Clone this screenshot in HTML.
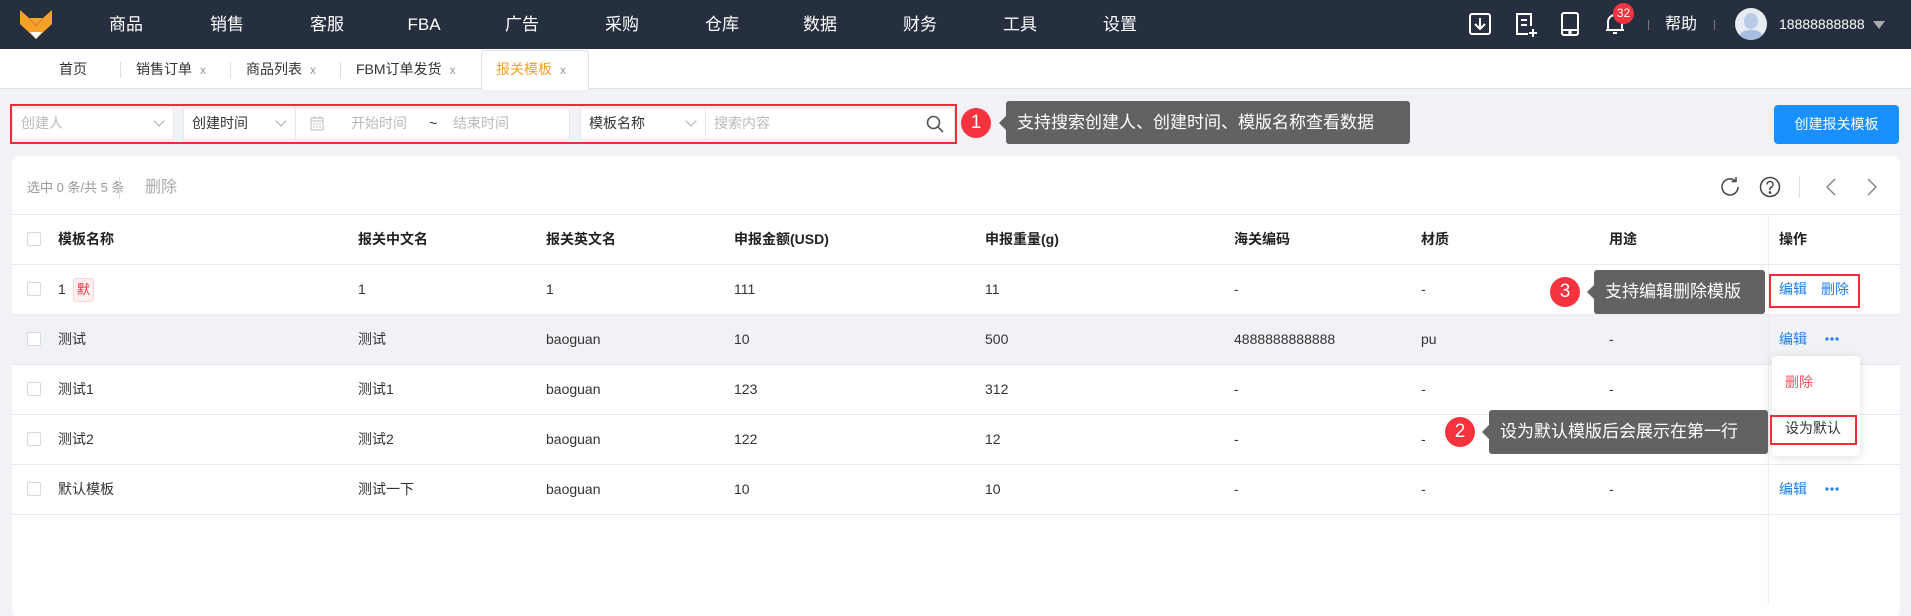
<!DOCTYPE html>
<html><head><meta charset="utf-8"><style>
*{margin:0;padding:0;box-sizing:border-box}
body{width:1911px;height:605px;overflow:hidden;background:#f0f2f5;font-family:"Liberation Sans","Noto Sans CJK SC",sans-serif;font-size:14px;color:#333;position:relative}
.abs{position:absolute}
.nav{left:0;top:0;width:1911px;height:49px;background:#252f3f}
.nav .it{position:absolute;top:0;line-height:49px;color:#fff;font-size:17px;transform:translateX(-50%)}
.tabs{left:0;top:49px;width:1911px;height:40px;background:#fff;border-bottom:1px solid #dcdfe6}
.tab{position:absolute;top:0;height:40px;line-height:40px;font-size:14px;color:#333}
.tab .x{color:#999;font-size:12px;margin-left:8px}
.sep{position:absolute;top:13px;width:1px;height:16px;background:#ddd}
.inp{position:absolute;top:107px;height:33px;background:#fff;border:1px solid #e4e7ed;line-height:31px;font-size:14px;color:#bbb;padding-left:8px}
.chev{position:absolute;right:10px;top:9px;width:8px;height:8px;border-right:1px solid #aaa;border-bottom:1px solid #aaa;transform:rotate(45deg)}
.circ{position:absolute;width:30px;height:30px;border-radius:50%;background:#f5333f;color:#fff;font-size:19px;text-align:center;line-height:30px}
.tip{position:absolute;background:#626262;color:#fff;font-size:17px;border-radius:3px;padding-left:11px}
.tip:before{content:"";position:absolute;left:-7px;top:50%;margin-top:-7px;border-right:7px solid #626262;border-top:7px solid transparent;border-bottom:7px solid transparent}
.card{left:12px;top:156px;width:1888px;height:460px;background:#fff;border-radius:6px}
.row{position:absolute;left:12px;width:1888px;height:50px;border-bottom:1px solid #e8eaee}
.c{position:absolute;top:0;line-height:49px;font-size:14px;color:#333}
.cb{position:absolute;left:15px;top:17px;width:14px;height:14px;border:1px solid #d5d8de;border-radius:2px;background:#fff}
.h .c{font-weight:bold;color:#222}
.blue{color:#1f7fe8}
.dots{position:absolute;left:1813px;top:22px}
.redbox{position:absolute;border:2px solid #f02c37}
</style></head><body>
<div class="abs nav">
<svg class="abs" style="left:20px;top:10px" width="32" height="29" viewBox="0 0 32 29"><path d="M0 0 L9 8 L23 8 L32 0 L32 14 L16 29 L0 14 Z" fill="#f7a128"/><path d="M9 8 L16 16 L23 8" fill="none" stroke="#d87f12" stroke-width="1"/><path d="M10 22 L16 29 L22 22 Z" fill="#fff"/></svg>
<span class="it" style="left:126px">商品</span><span class="it" style="left:227px">销售</span><span class="it" style="left:327px">客服</span><span class="it" style="left:424px">FBA</span><span class="it" style="left:522px">广告</span><span class="it" style="left:622px">采购</span><span class="it" style="left:722px">仓库</span><span class="it" style="left:820px">数据</span><span class="it" style="left:920px">财务</span><span class="it" style="left:1020px">工具</span><span class="it" style="left:1120px">设置</span>
<svg class="abs" style="left:1468px;top:12px" width="24" height="24" viewBox="0 0 24 24" fill="none" stroke="#fff" stroke-width="2"><rect x="2" y="2" width="20" height="20" rx="2"/><path d="M12 6v11M7 12l5 5 5-5"/></svg>
<svg class="abs" style="left:1514px;top:12px" width="24" height="26" viewBox="0 0 24 26" fill="none" stroke="#fff" stroke-width="2"><path d="M14 22H3V2h14v12"/><path d="M7 8h6M7 13h6M19 17v8M15 21h8"/></svg>
<svg class="abs" style="left:1560px;top:12px" width="20" height="24" viewBox="0 0 20 24" fill="none" stroke="#fff" stroke-width="2"><rect x="2" y="1" width="16" height="22" rx="2"/><path d="M2 18h16"/><circle cx="10" cy="20.5" r="0.8" fill="#fff"/></svg>
<svg class="abs" style="left:1604px;top:12px" width="22" height="24" viewBox="0 0 22 24" fill="none" stroke="#fff" stroke-width="2"><path d="M4 18V10a7 7 0 0 1 14 0v8zM2 18h18M9 21h4"/></svg>
<div class="abs" style="left:1613px;top:3px;width:21px;height:21px;border-radius:50%;background:#f5333f;color:#fff;font-size:12px;text-align:center;line-height:21px">32</div>
<div class="abs" style="left:1648px;top:20px;width:1px;height:10px;background:#777"></div>
<span class="it" style="left:1681px;font-size:16px">帮助</span>
<div class="abs" style="left:1714px;top:20px;width:1px;height:10px;background:#777"></div>
<div class="abs" style="left:1735px;top:8px;width:32px;height:32px;border-radius:50%;background:#e6ebf2;overflow:hidden"><div class="abs" style="left:9px;top:5px;width:14px;height:16px;border-radius:50%;background:#b9cbe6"></div><div class="abs" style="left:4px;top:22px;width:24px;height:14px;border-radius:50%;background:#a7bde0"></div></div>
<span class="abs" style="left:1779px;top:0;line-height:49px;color:#fff;font-size:14px">18888888888</span>
<div class="abs" style="left:1873px;top:21px;border-top:8px solid #aaa;border-left:6px solid transparent;border-right:6px solid transparent"></div>
</div>
<div class="abs tabs">
<span class="tab" style="left:59px">首页</span><div class="sep" style="left:120px"></div>
<span class="tab" style="left:136px">销售订单<span class="x">x</span></span><div class="sep" style="left:230px"></div>
<span class="tab" style="left:246px">商品列表<span class="x">x</span></span><div class="sep" style="left:340px"></div>
<span class="tab" style="left:356px">FBM订单发货<span class="x">x</span></span>
<div class="abs" style="left:481px;top:1px;width:108px;height:40px;border:1px solid #dcdfe6;border-bottom:1px solid #fff;border-radius:4px 4px 0 0;background:#fff"></div>
<span class="tab" style="left:496px;color:#f7a128">报关模板<span class="x">x</span></span>
</div>
<div class="inp" style="left:12px;width:162px">创建人<div class="chev"></div></div>
<div class="inp" style="left:183px;width:113px;color:#333">创建时间<div class="chev"></div></div>
<div class="inp" style="left:295px;width:275px"><svg class="abs" style="left:14px;top:8px" width="14" height="15" viewBox="0 0 14 15" fill="none" stroke="#bbb"><rect x="1" y="2" width="12" height="12"/><path d="M1 5h12M4 0v3M10 0v3M3 8h2M6 8h2M9 8h2M3 11h2M6 11h2M9 11h2"/></svg><span class="abs" style="left:55px">开始时间</span><span class="abs" style="left:133px;color:#333">~</span><span class="abs" style="left:157px">结束时间</span></div>
<div class="inp" style="left:580px;width:126px;color:#333">模板名称<div class="chev"></div></div>
<div class="inp" style="left:705px;width:250px">搜索内容<svg class="abs" style="left:220px;top:7px" width="18" height="18" viewBox="0 0 18 18" fill="none" stroke="#555" stroke-width="1.6"><circle cx="7.5" cy="7.5" r="6"/><path d="M12 12l5 5"/></svg></div>
<div class="redbox" style="left:10px;top:104px;width:947px;height:40px"></div>
<div class="circ" style="left:961px;top:108px">1</div>
<div class="tip" style="left:1006px;top:101px;width:404px;height:43px;line-height:43px">支持搜索创建人、创建时间、模版名称查看数据</div>
<div class="abs" style="left:1774px;top:105px;width:125px;height:39px;background:#1890ff;border-radius:4px;color:#fff;font-size:14px;text-align:center;line-height:39px">创建报关模板</div>
<div class="abs card"></div>
<span class="abs" style="left:27px;top:177px;line-height:22px;color:#999;font-size:13px">选中 0 条/共 5 条</span>
<div class="abs" style="left:119px;top:177px;width:1px;height:22px;background:#ddd"></div>
<span class="abs" style="left:145px;top:176px;line-height:24px;color:#aaa;font-size:16px">删除</span>
<svg class="abs" style="left:1719px;top:176px" width="22" height="22" viewBox="0 0 22 22" fill="none" stroke="#444" stroke-width="1.5"><path d="M19 11a8 8 0 1 1-3-6.3"/><path d="M17 1v4.5h-4.5"/></svg>
<svg class="abs" style="left:1759px;top:176px" width="22" height="22" viewBox="0 0 22 22" fill="none" stroke="#444" stroke-width="1.5"><circle cx="11" cy="11" r="9.5"/><path d="M8 8.5a3 3 0 1 1 4 2.8c-.8.4-1 1-1 2v.7"/><circle cx="11" cy="16.5" r=".6" fill="#444"/></svg>
<div class="abs" style="left:1799px;top:176px;width:1px;height:22px;background:#ddd"></div>
<svg class="abs" style="left:1825px;top:178px" width="12" height="18" viewBox="0 0 12 18" fill="none" stroke="#888" stroke-width="1.5"><path d="M10 1L2 9l8 8"/></svg>
<svg class="abs" style="left:1866px;top:178px" width="12" height="18" viewBox="0 0 12 18" fill="none" stroke="#888" stroke-width="1.5"><path d="M2 1l8 8-8 8"/></svg>
<div class="abs" style="left:12px;top:214px;width:1888px;height:1px;background:#e8eaee"></div>
<div class="row h" style="top:215px"><div class="cb"></div><span class="c" style="left:46px">模板名称</span><span class="c" style="left:346px">报关中文名</span><span class="c" style="left:534px">报关英文名</span><span class="c" style="left:722px">申报金额(USD)</span><span class="c" style="left:973px">申报重量(g)</span><span class="c" style="left:1222px">海关编码</span><span class="c" style="left:1409px">材质</span><span class="c" style="left:1597px">用途</span><span class="c" style="left:1767px">操作</span></div>
<div class="row" style="top:265px"><div class="cb"></div><span class="c" style="left:46px">1</span><span class="abs" style="left:61px;top:13px;width:21px;height:24px;border:1px solid #fbd3d5;background:#fef0f0;color:#f5333f;border-radius:3px;font-size:13px;text-align:center;line-height:22px">默</span><span class="c" style="left:346px">1</span><span class="c" style="left:534px">1</span><span class="c" style="left:722px">111</span><span class="c" style="left:973px">11</span><span class="c" style="left:1222px">-</span><span class="c" style="left:1409px">-</span><span class="c blue" style="left:1767px">编辑</span><span class="c blue" style="left:1809px">删除</span></div>
<div class="row" style="top:315px;background:#f0f2f5"><div class="cb"></div><span class="c" style="left:46px">测试</span><span class="c" style="left:346px">测试</span><span class="c" style="left:534px">baoguan</span><span class="c" style="left:722px">10</span><span class="c" style="left:973px">500</span><span class="c" style="left:1222px">4888888888888</span><span class="c" style="left:1409px">pu</span><span class="c" style="left:1597px">-</span><span class="c blue" style="left:1767px">编辑</span><svg class="dots" width="14" height="4" viewBox="0 0 14 4"><circle cx="2" cy="2" r="1.6" fill="#1f7fe8"/><circle cx="7" cy="2" r="1.6" fill="#1f7fe8"/><circle cx="12" cy="2" r="1.6" fill="#1f7fe8"/></svg></div>
<div class="row" style="top:365px"><div class="cb"></div><span class="c" style="left:46px">测试1</span><span class="c" style="left:346px">测试1</span><span class="c" style="left:534px">baoguan</span><span class="c" style="left:722px">123</span><span class="c" style="left:973px">312</span><span class="c" style="left:1222px">-</span><span class="c" style="left:1409px">-</span><span class="c" style="left:1597px">-</span></div>
<div class="row" style="top:415px"><div class="cb"></div><span class="c" style="left:46px">测试2</span><span class="c" style="left:346px">测试2</span><span class="c" style="left:534px">baoguan</span><span class="c" style="left:722px">122</span><span class="c" style="left:973px">12</span><span class="c" style="left:1222px">-</span><span class="c" style="left:1409px">-</span></div>
<div class="row" style="top:465px"><div class="cb"></div><span class="c" style="left:46px">默认模板</span><span class="c" style="left:346px">测试一下</span><span class="c" style="left:534px">baoguan</span><span class="c" style="left:722px">10</span><span class="c" style="left:973px">10</span><span class="c" style="left:1222px">-</span><span class="c" style="left:1409px">-</span><span class="c" style="left:1597px">-</span><span class="c blue" style="left:1767px">编辑</span><svg class="dots" width="14" height="4" viewBox="0 0 14 4"><circle cx="2" cy="2" r="1.6" fill="#1f7fe8"/><circle cx="7" cy="2" r="1.6" fill="#1f7fe8"/><circle cx="12" cy="2" r="1.6" fill="#1f7fe8"/></svg></div>
<div class="abs" style="left:1768px;top:215px;width:1px;height:390px;box-shadow:-3px 0 6px rgba(0,0,0,.08);background:#eee"></div>
<div class="abs" style="left:1772px;top:356px;width:88px;height:100px;background:#fff;border-radius:4px;box-shadow:0 2px 10px rgba(0,0,0,.12)"><span class="abs" style="left:13px;top:16px;color:#f5535c;font-size:14px">删除</span><span class="abs" style="left:13px;top:62px;color:#333;font-size:14px">设为默认</span></div>
<div class="redbox" style="left:1769px;top:274px;width:91px;height:34px"></div>
<div class="redbox" style="left:1770px;top:415px;width:87px;height:30px"></div>
<div class="circ" style="left:1550px;top:277px">3</div>
<div class="tip" style="left:1594px;top:270px;width:171px;height:44px;line-height:44px">支持编辑删除模版</div>
<div class="circ" style="left:1445px;top:417px">2</div>
<div class="tip" style="left:1489px;top:410px;width:279px;height:44px;line-height:44px">设为默认模版后会展示在第一行</div>
</body></html>
